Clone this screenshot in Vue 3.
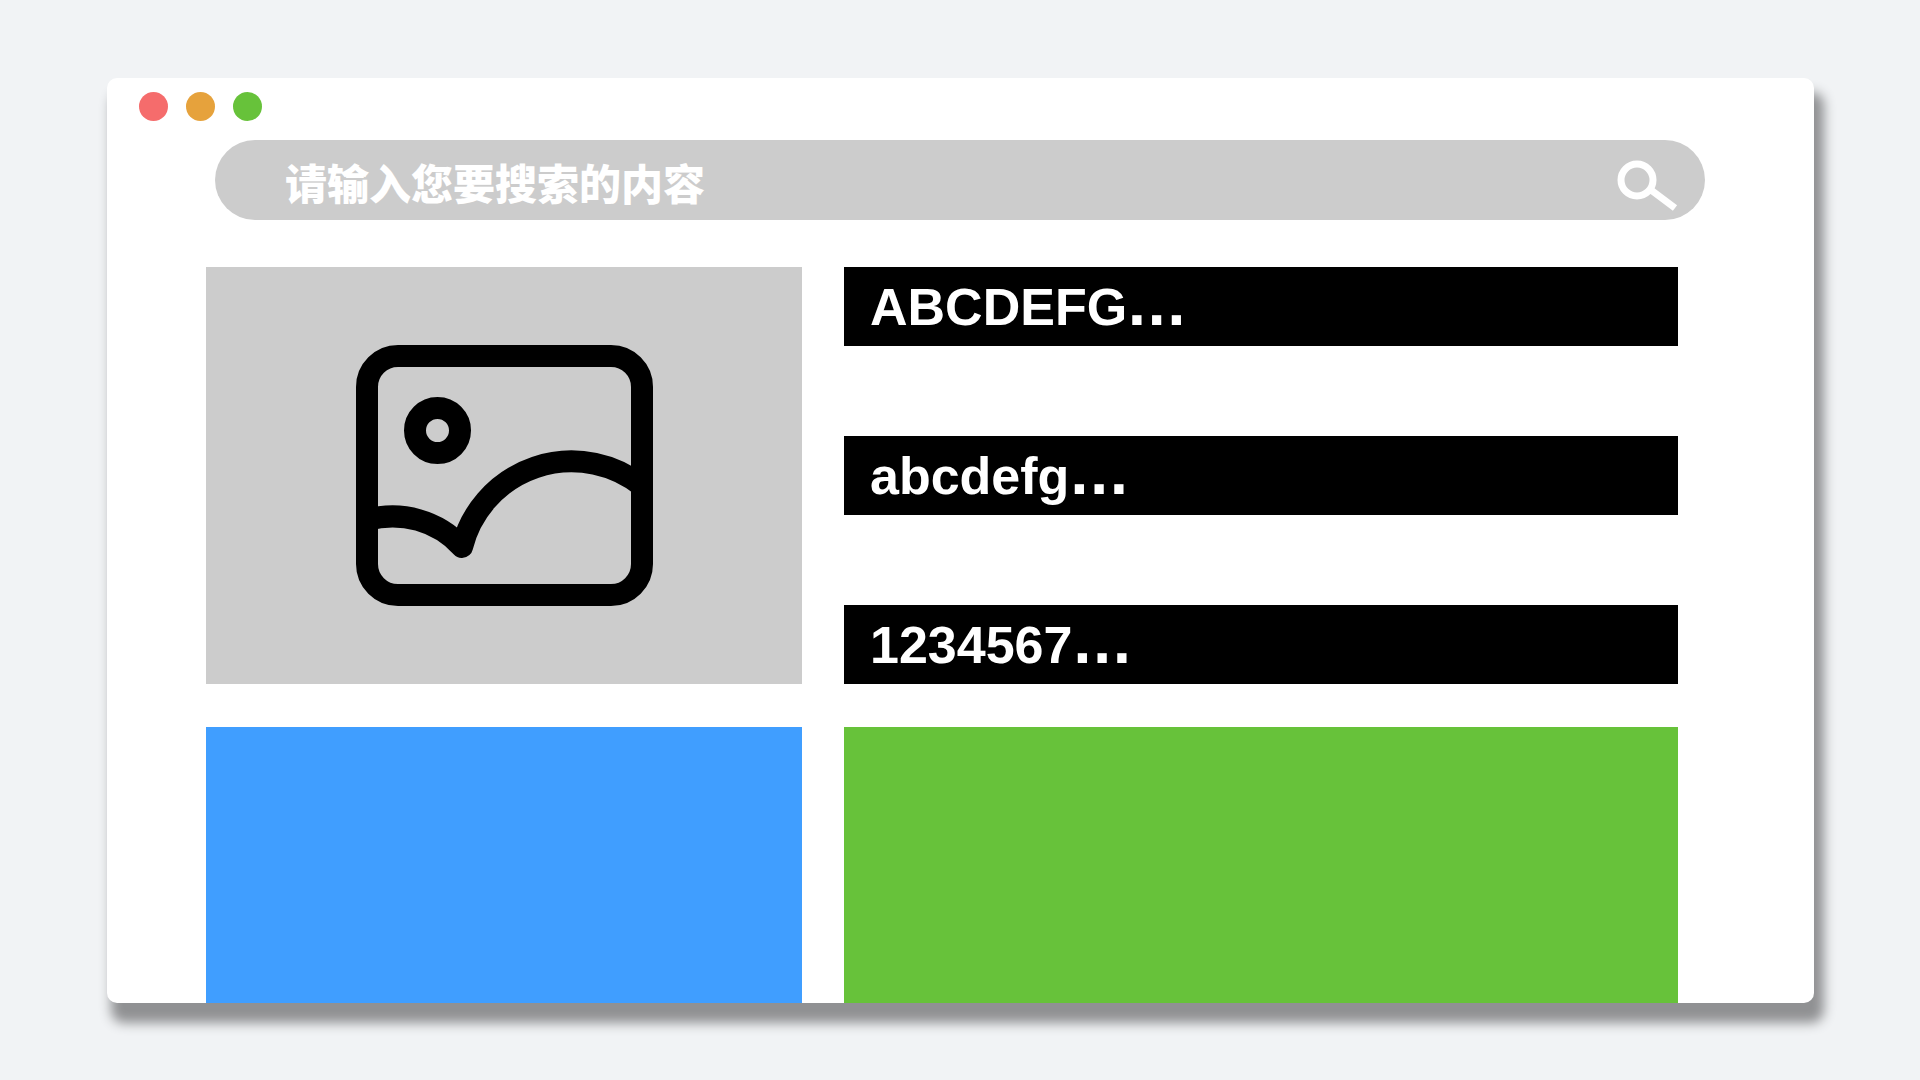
<script setup>
import { ref } from 'vue'

const keyword = ref('')
const entries = ['ABCDEFG', 'abcdefg', '1234567']
</script>

<template>
  <div class="page">
    <main class="window">
      <div class="dots">
        <span class="dot red"></span>
        <span class="dot orange"></span>
        <span class="dot green"></span>
      </div>

      <form class="search" role="search" @submit.prevent>
        <input v-model="keyword" type="text" aria-label="搜索" placeholder="请输入您要搜索的内容" />
        <button type="submit" aria-label="搜索">
          <svg viewBox="0 0 62 52" width="62" height="52" fill="none" stroke="#fff" stroke-width="7">
            <circle cx="20" cy="20" r="16" />
            <path d="M34 30 58 48" />
          </svg>
        </button>
      </form>

      <div class="content">
        <div class="picture">
          <svg viewBox="16 15 297 261" width="297" height="261" fill="none" stroke="#000" stroke-width="22" stroke-linejoin="round">
            <rect x="27" y="26" width="275" height="239" rx="31" />
            <circle cx="97.5" cy="100.5" r="22.5" />
            <path d="M27 190A94 94 0 0 1 122 217A113 113 0 0 1 302 156" />
          </svg>
        </div>
        <ul class="entries">
          <li v-for="entry in entries" :key="entry">{{ entry }}<span class="more">...</span></li>
        </ul>
        <div class="tile blue"></div>
        <div class="tile green"></div>
      </div>
    </main>
  </div>
</template>

<style>
body {
  margin: 0;
}
</style>

<style scoped>
.page {
  box-sizing: border-box;
  display: flex;
  min-height: 100vh;
  padding: 78px 106px 77px 107px;
  background: #f1f3f5;
  font-family: "Liberation Sans", "Noto Sans CJK SC", sans-serif;
}

.window {
  flex: 1;
  display: flex;
  flex-direction: column;
  border-radius: 10px;
  background: #fff;
  box-shadow: 7px 17px 12px 3px #909193;
}

.dots {
  display: flex;
  gap: 18px;
  padding: 14px 32px 19px;
}

.dot {
  width: 29px;
  height: 29px;
  border-radius: 50%;
}

.red {
  background: #f56c6c;
}

.orange {
  background: #e6a23c;
}

.green {
  background: #67c23a;
}

.blue {
  background: #409eff;
}

.search {
  box-sizing: border-box;
  display: flex;
  align-items: center;
  height: 80px;
  margin: 0 109px 0 108px;
  padding: 0 26px 0 70px;
  border-radius: 40px;
  background: #ccc;
}

.search input {
  flex: 1;
  min-width: 0;
  height: 80px;
  padding: 2px 0 0;
  box-sizing: border-box;
  border: 0;
  outline: 0;
  background: transparent;
  color: #fff;
  font: 900 42px "Noto Sans CJK SC", sans-serif;
}

.search input::placeholder {
  color: #fff;
  opacity: 1;
}

.search button {
  display: flex;
  padding: 12px 0 0;
  border: 0;
  background: none;
  cursor: pointer;
}

.content {
  flex: 1;
  display: grid;
  grid-template-columns: 596fr 834fr;
  grid-template-rows: auto 1fr;
  gap: 43px 42px;
  margin: 47px 136px 0 99px;
}

.picture {
  display: flex;
  align-items: center;
  justify-content: center;
  background: #ccc;
}

.entries {
  display: flex;
  flex-direction: column;
  gap: 90px;
  margin: 0;
  padding: 0;
  list-style: none;
}

.entries li {
  height: 79px;
  padding: 0 26px;
  background: #000;
  color: #fff;
  font-size: 52px;
  font-weight: bold;
  line-height: 80px;
}

.more {
  font-family: "DejaVu Sans", sans-serif;
  line-height: 1;
}
</style>
